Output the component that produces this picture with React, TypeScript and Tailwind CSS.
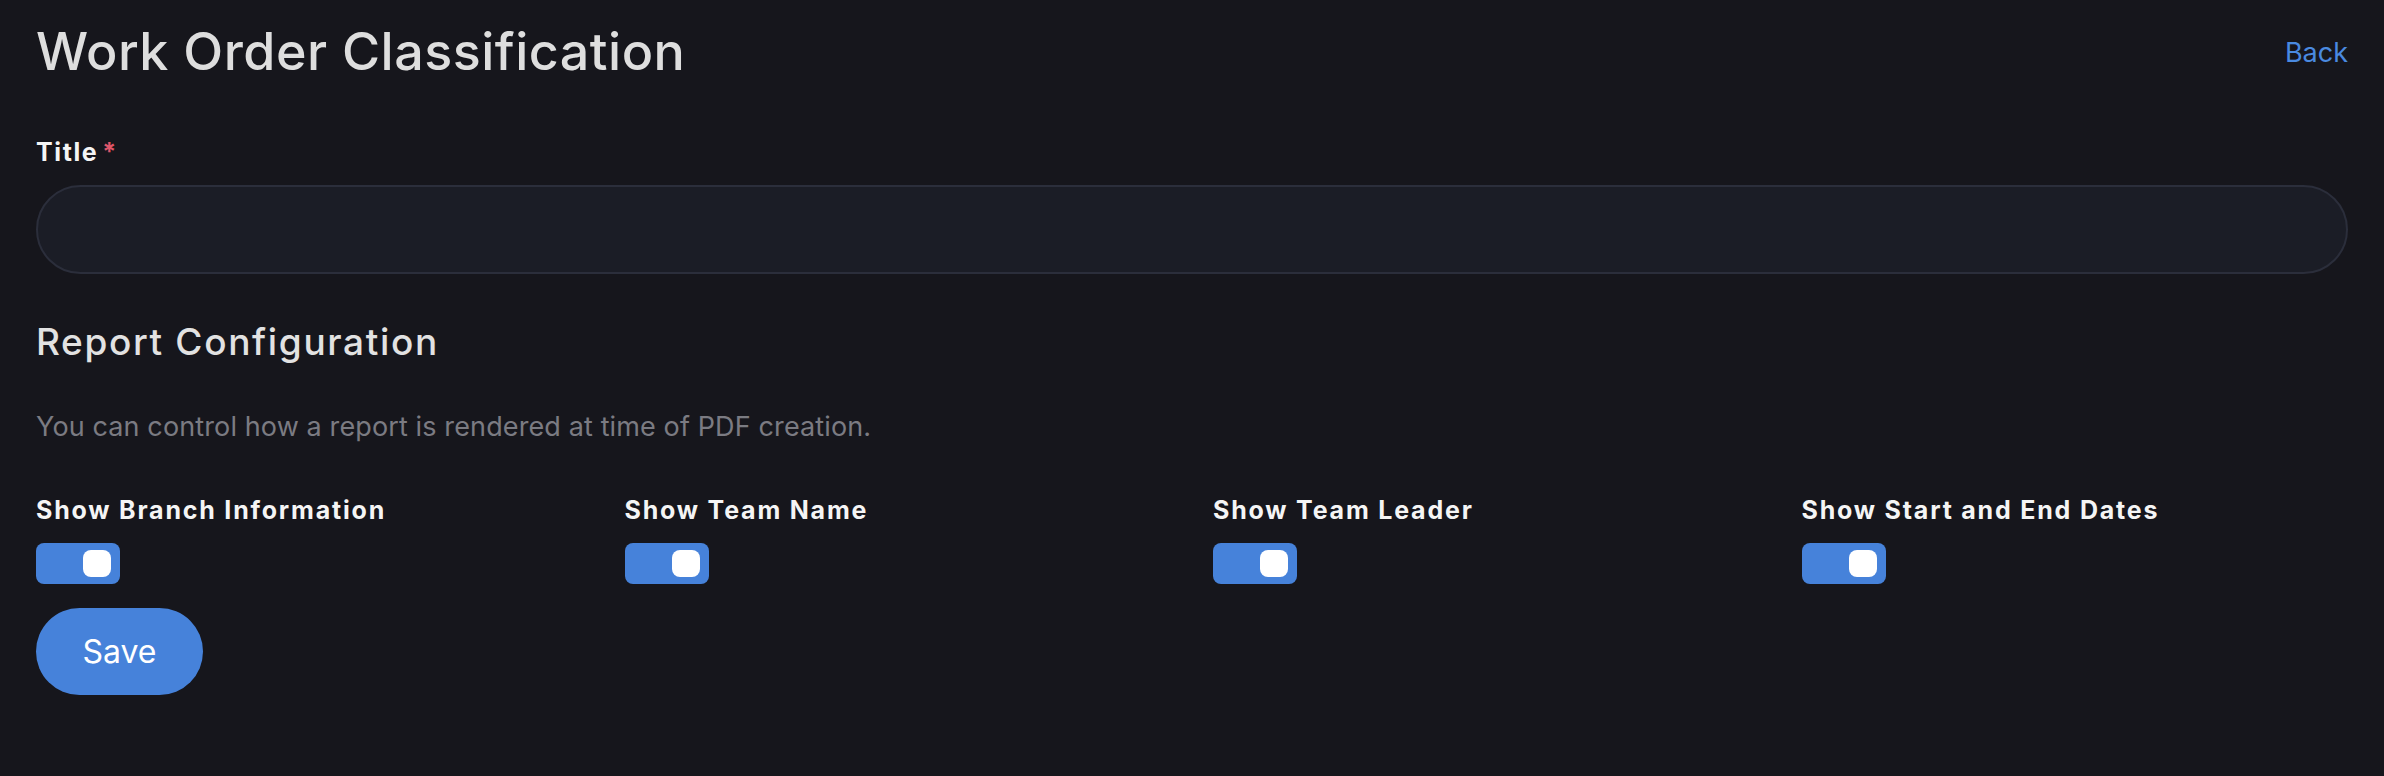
import React from "react";

function Toggle() {
  return (
    <div className="flex h-[41px] w-[84px] items-center justify-end rounded-[8px] bg-[#4682da] pr-[9px]">
      <div className="h-[27px] w-[28px] rounded-[8px] bg-white" />
    </div>
  );
}

const items = [
  "Show Branch Information",
  "Show Team Name",
  "Show Team Leader",
  "Show Start and End Dates",
];

export default function App() {
  return (
    <div
      className="min-h-screen bg-[#16161c] px-[36px] pt-[26px]"
      style={{ fontFamily: "Inter, 'Noto Sans', sans-serif" }}
    >
      <div className="flex items-center justify-between">
        <h1 className="text-[52px] leading-[52px] font-medium tracking-[0.5px] text-[#dedede]">
          Work Order Classification
        </h1>
        <a className="text-[27px] leading-[27px] text-[#4a8ae0]">Back</a>
      </div>

      <div className="mt-[62px] text-[25px] leading-[24px] font-bold tracking-[1.6px] text-[#f5f5f5]">
        Title<span className="ml-[4px] text-[#e0566a]">*</span>
      </div>
      <div className="mt-[21px] h-[89px] w-full rounded-full border-2 border-[#2b2e3b] bg-[#1b1d26]" />

      <h2 className="mt-[49px] text-[37px] leading-[37px] font-medium tracking-[1.65px] text-[#e2e2e2]">
        Report Configuration
      </h2>
      <p className="mt-[53px] text-[27px] leading-[27px] tracking-[0.12px] text-[#7b7b82]">
        You can control how a report is rendered at time of PDF creation.
      </p>

      <div className="mt-[58px] grid grid-cols-4 gap-x-[42px]">
        {items.map((t) => (
          <div key={t} className="flex flex-col">
            <div className="text-[25px] leading-[25px] font-bold tracking-[1.8px] text-[#f5f5f5]">{t}</div>
            <div className="mt-[20px]">
              <Toggle />
            </div>
          </div>
        ))}
      </div>

      <button className="mt-[24px] flex h-[87px] w-[167px] items-center justify-center rounded-full bg-[#4682da] text-[32px] text-white">
        Save
      </button>
    </div>
  );
}
